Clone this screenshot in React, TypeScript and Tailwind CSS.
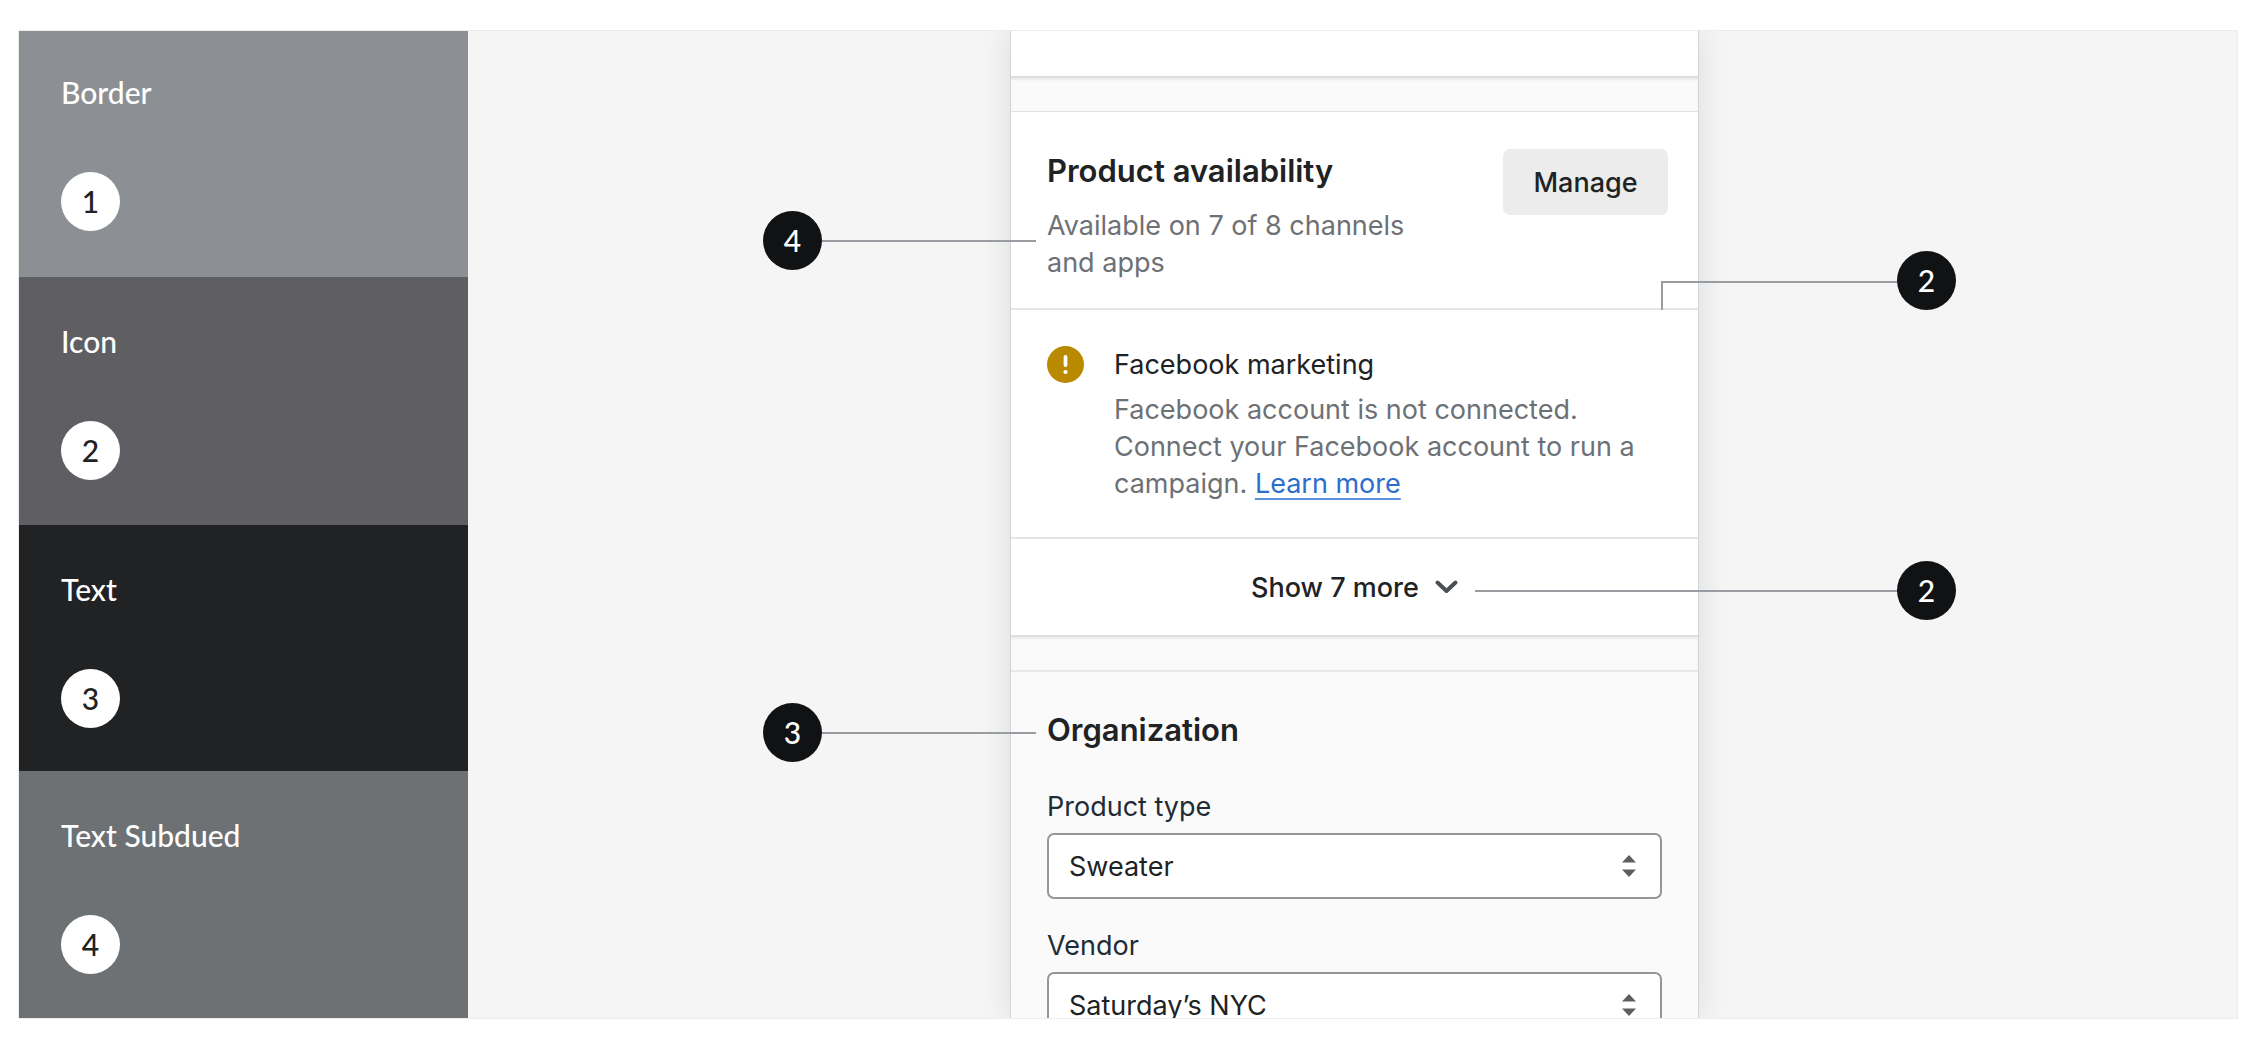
import type { ReactNode } from "react";

const swatches = [
  { label: "Border", number: 1, row: "basis-[246px] bg-[#8c9094] pt-[43px]" },
  { label: "Icon", number: 2, row: "basis-[248px] bg-[#5f5e62] pt-[46px]" },
  { label: "Text", number: 3, row: "basis-[247px] bg-[#212224] pt-[46px]" },
  { label: "Text Subdued", number: 4, row: "basis-[247px] bg-[#6d7174] pt-[46px]" },
];

function Badge({ children, light = false }: { children: ReactNode; light?: boolean }) {
  return (
    <span
      className={`flex size-[59px] shrink-0 items-center justify-center rounded-full font-['Lato',sans-serif] text-[30px] leading-[37px] font-medium ${
        light ? "bg-white text-[#202223]" : "bg-[#111213] text-white"
      }`}
    >
      {children}
    </span>
  );
}

function SelectField({ id, label, value }: { id: string; label: string; value: string }) {
  return (
    <div className="flex flex-col gap-2">
      <label htmlFor={id} className="text-[#212b36]">
        {label}
      </label>
      <div className="relative">
        <select
          id={id}
          defaultValue={value}
          className="h-[66px] w-full appearance-none rounded-[7px] border-2 border-[#93979b] bg-white pr-16 pl-5 text-[#202223]"
        >
          <option>{value}</option>
        </select>
        <svg
          aria-hidden="true"
          viewBox="0 0 14 22"
          className="pointer-events-none absolute top-[22px] right-[26px] h-[22px] w-[14px] fill-[#5c5f62]"
        >
          <path d="M7 0l7 7.5H0zM7 22l7-7.5H0z" />
        </svg>
      </div>
    </div>
  );
}

function Divider() {
  return <div className="h-[35px] bg-[#fafafa] shadow-[inset_0_2px_0_#dfdfdf,inset_0_4px_2px_#ebebeb]" />;
}

export default function App() {
  return (
    <div className="flex h-screen bg-white pt-[30px] pr-[14px] pb-[23px] pl-[18px] font-['Inter',sans-serif] text-[27px] leading-[37px] text-[#202223]">
      <main className="flex min-w-0 flex-1 overflow-hidden border border-[#ececec] bg-[#f5f5f5]">
        <ul className="flex w-[449px] shrink-0 flex-col">
          {swatches.map((s) => (
            <li key={s.label} className={`flex grow flex-col items-start gap-[61px] pl-[42px] ${s.row}`}>
              <span className="font-['Lato',sans-serif] text-[30px] font-medium text-white">{s.label}</span>
              <Badge light>{s.number}</Badge>
            </li>
          ))}
        </ul>

        <div className="flex min-w-0 flex-1 justify-center pl-1">
          <div className="w-[687px] shrink-0 bg-[#fafafa] shadow-[0_0_0_1px_#d3d5d6,0_0_30px_rgba(33,43,54,0.13)]">
            <div className="h-[45px] bg-white" />
            <Divider />

            <section className="bg-white">
              <header className="relative flex items-start justify-between border-t border-b-2 border-t-[#e1e3e5] border-b-[#e4e5e7] pt-[37px] pr-[30px] pb-[27px] pl-9">
                <div className="flex max-w-[380px] flex-col gap-[18px] pt-[3px]">
                  <h2 className="text-[31px] font-semibold">Product availability</h2>
                  <p className="text-[#6d7175]">Available on 7 of 8 channels and apps</p>
                </div>
                <button type="button" className="h-[66px] w-[165px] rounded-[7px] bg-[#ececec] font-medium">
                  Manage
                </button>
                <div className="absolute top-[99px] right-[calc(100%-25px)] flex items-center">
                  <Badge>4</Badge>
                  <span className="h-[2px] w-[214px] bg-[#999ca0]" />
                </div>
                <div className="absolute -bottom-[2px] left-[calc(100%-37px)] flex items-end">
                  <span className="h-[29px] w-[236px] border-t-2 border-l-2 border-[#999ca0]" />
                  <Badge>2</Badge>
                </div>
              </header>

              <div className="flex items-start gap-[30px] border-b-2 border-[#e4e5e7] pt-9 pr-[30px] pb-[35px] pl-9">
                <svg aria-hidden="true" viewBox="0 0 37 37" className="size-[37px] shrink-0">
                  <circle cx="18.5" cy="18.5" r="18.5" fill="#b98900" />
                  <rect x="16.6" y="9" width="3.8" height="12" rx="1.9" fill="#fff" />
                  <circle cx="18.5" cy="26" r="2.1" fill="#fff" />
                </svg>
                <div className="flex flex-col gap-2">
                  <h3>Facebook marketing</h3>
                  <p className="text-[#6d7175]">
                    Facebook account is not connected. Connect your Facebook account to run a campaign.{" "}
                    <a
                      href="#learn"
                      className="text-[#2c6ecb] underline decoration-[#5a8fdb] decoration-2 underline-offset-[5px]"
                    >
                      Learn more
                    </a>
                  </p>
                </div>
              </div>

              <div className="relative flex h-24 items-center justify-center">
                <button type="button" className="flex items-center gap-4 font-medium">
                  Show 7 more
                  <svg aria-hidden="true" viewBox="0 0 23 14" className="h-[14px] w-[23px]">
                    <path
                      d="M2.5 2.5l9 8.5 9-8.5"
                      fill="none"
                      stroke="#4a4f54"
                      strokeWidth="4"
                      strokeLinecap="round"
                      strokeLinejoin="round"
                    />
                  </svg>
                </button>
                <div className="absolute top-[22px] left-[calc(100%-223px)] flex items-center">
                  <span className="h-[2px] w-[422px] bg-[#999ca0]" />
                  <Badge>2</Badge>
                </div>
              </div>
            </section>
            <Divider />

            <section className="relative flex flex-col border-t-2 border-[#e7e8ea] px-9 pt-[39px]">
              <h2 className="pb-10 text-[31px] font-semibold">Organization</h2>
              <div className="flex flex-col gap-7">
                <SelectField id="product-type" label="Product type" value="Sweater" />
                <SelectField id="vendor" label="Vendor" value="Saturday’s NYC" />
              </div>
              <div className="absolute top-[31px] right-[calc(100%-25px)] flex items-center">
                <Badge>3</Badge>
                <span className="h-[2px] w-[214px] bg-[#999ca0]" />
              </div>
            </section>
          </div>
        </div>
      </main>
    </div>
  );
}
